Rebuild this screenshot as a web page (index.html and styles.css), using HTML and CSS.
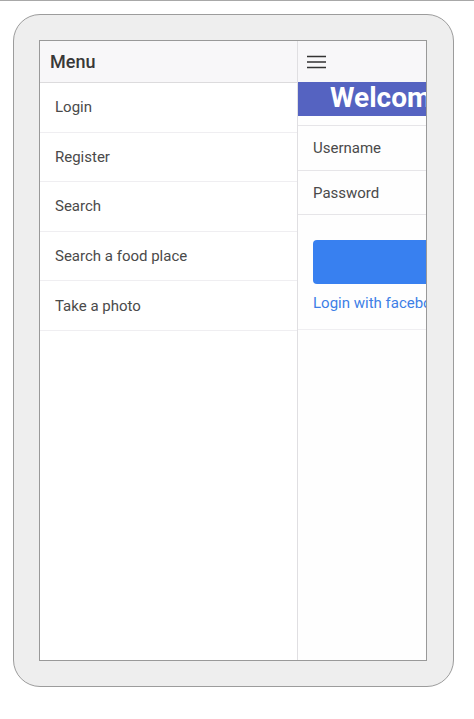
FILE: index.html
```html
<!DOCTYPE html>
<html>
<head>
<meta charset="utf-8">
<link rel="stylesheet" href="styles.css">
</head>
<body>
<div class="topline"></div>
<div class="device">
  <div class="screen">
    <aside class="menu">
      <div class="menu-header">Menu</div>
      <ul class="menu-list">
        <li class="menu-item">Login</li>
        <li class="menu-item">Register</li>
        <li class="menu-item">Search</li>
        <li class="menu-item">Search a food place</li>
        <li class="menu-item">Take a photo</li>
      </ul>
    </aside>
    <main class="content">
      <div class="inner">
        <div class="toolbar">
          <svg class="hamburger" width="20" height="16" viewBox="0 0 20 16">
            <path d="M0 2.5H19M0 8H19M0 13.5H19" stroke="#333" stroke-width="1.6" fill="none"/>
          </svg>
        </div>
        <div class="welcome">Welcome</div>
        <div class="form">
          <div class="field">Username</div>
          <div class="field">Password</div>
        </div>
        <div class="actions">
          <div class="btn"></div>
          <div class="link">Login with facebook</div>
        </div>
      </div>
    </main>
  </div>
</div>
</body>
</html>
```
FILE: styles.css
```css
* { box-sizing: border-box; }
html, body { margin: 0; padding: 0; background: #fff; }
body { font-family: Roboto, "Liberation Sans", sans-serif; }

.topline { height: 1px; background: #a8a8a8; }

.device {
  margin: 13px 0 0 13px;
  width: 441px;
  height: 673px;
  border: 1px solid #9c9c9c;
  border-radius: 27px;
  background: #eeeeee;
  padding: 25px;
}

.screen {
  width: 388px;
  height: 621px;
  border: 1px solid #999;
  background: #fefefe;
  display: flex;
  overflow: hidden;
}

.menu {
  width: 258px;
  flex: none;
  border-right: 1px solid #e0dfe2;
  background: #fff;
}
.menu-header {
  height: 42px;
  background: #f8f7f9;
  border-bottom: 1px solid #dcdbdd;
  padding-left: 10px;
  display: flex;
  align-items: center;
  font-size: 18px;
  font-weight: 500;
  color: #383838;
}
.menu-list { list-style: none; margin: 0; padding: 0; }
.menu-item {
  height: 49.6px;
  border-bottom: 1px solid #efeef1;
  padding-left: 15px;
  display: flex;
  align-items: center;
  font-size: 15px;
  color: #4a4a4a;
}

.content { flex: 1; overflow: hidden; }
.inner { width: 320px; }
.toolbar {
  height: 41px;
  background: #f8f7f9;
  display: flex;
  align-items: center;
  padding-left: 9px;
}
.hamburger { display: block; margin-top: 1px; }
.welcome {
  height: 34px;
  background: #5563c1;
  color: #fff;
  font-size: 28px;
  font-weight: 700;
  padding-left: 32px;
  line-height: 32px;
  white-space: nowrap;
}
.form { padding-top: 9px; }
.field {
  height: 45px;
  border-top: 1px solid #e6e5e8;
  padding-left: 15px;
  display: flex;
  align-items: center;
  font-size: 15px;
  color: #4a4a4a;
}
.field:last-child { border-bottom: 1px solid #e6e5e8; }
.actions {
  padding: 25px 0 0 15px;
  height: 115px;
  border-bottom: 1px solid #efeef1;
}
.btn {
  height: 44px;
  width: 290px;
  background: #3880f0;
  border-radius: 4px;
}
.link {
  margin-top: 10px;
  font-size: 15px;
  color: #3d7fe6;
  white-space: nowrap;
}
```
